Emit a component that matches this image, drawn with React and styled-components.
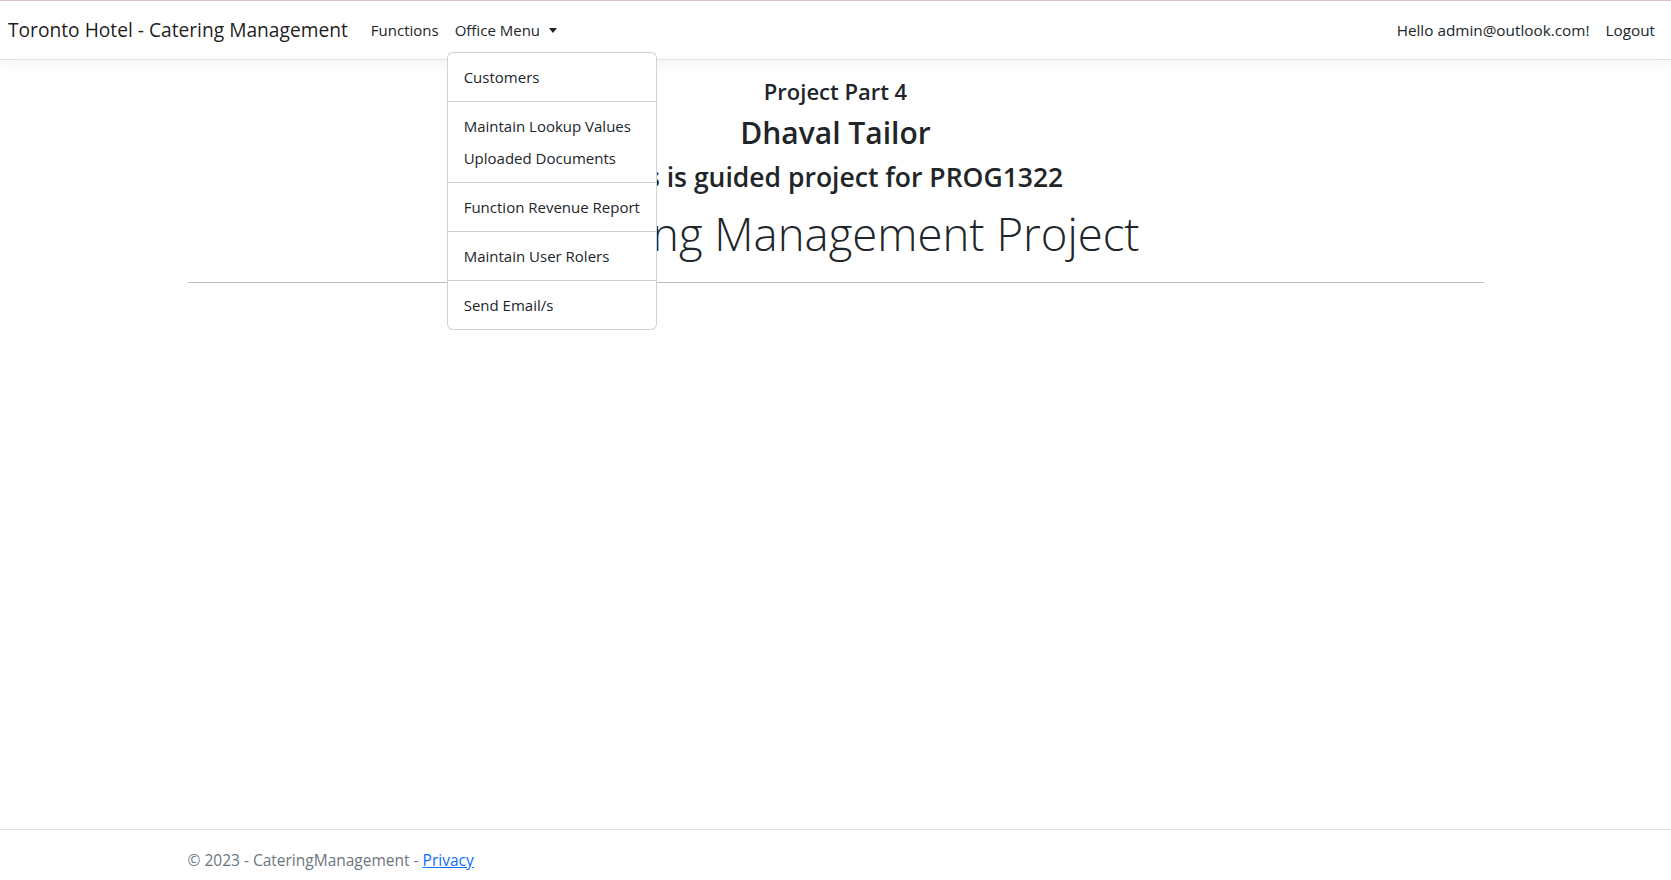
import React from 'react'
import styled, {createGlobalStyle} from 'styled-components'

const GlobalStyle = createGlobalStyle`
  html, body {
    margin: 0;
    padding: 0;
    height: 100%;
    overflow: hidden;
  }
  body {
    font-family: "Open Sans", "Noto Sans", sans-serif;
    font-size: 16px;
    color: #212529;
    background: #fff;
  }
  *, *::before, *::after {
    box-sizing: border-box;
  }
`

const Page = styled.div`
  display: flex;
  flex-direction: column;
  height: 880px;
`

const Navbar = styled.nav`
  display: flex;
  align-items: center;
  height: 60px;
  padding: 0 8px;
  border-top: 1px solid #d8c6cb;
  border-bottom: 1px solid #dee2e6;
  box-shadow: 0 4px 12px rgba(0, 0, 0, 0.05);
  background: #fff;
  position: relative;
  z-index: 2;
`

const Brand = styled.a`
  font-size: 19.2px;
  line-height: 30px;
  color: rgba(0, 0, 0, 0.9);
  text-decoration: none;
  margin-right: 15px;
  white-space: nowrap;
`

const NavList = styled.ul`
  display: flex;
  align-items: center;
  list-style: none;
  margin: 0;
  padding: 0;
  margin-left: ${props => props.right ? 'auto' : '0'};
`

const NavItem = styled.li`
  position: relative;
`

const NavLink = styled.a`
  display: block;
  padding: 8px;
  font-size: ${props => props.size || 15}px;
  line-height: 24px;
  color: #212529;
  text-decoration: none;
  white-space: nowrap;
  cursor: pointer;
`

const Toggle = styled(NavLink)`
  &::after {
    content: '';
    display: inline-block;
    margin-left: 9px;
    vertical-align: 3px;
    border-top: 5px solid #212529;
    border-left: 4.5px solid transparent;
    border-right: 4.5px solid transparent;
  }
`

const Menu = styled.ul`
  position: absolute;
  top: calc(100% + 2px);
  left: 0;
  width: 210px;
  margin: 0;
  padding: 8px 0;
  list-style: none;
  background: #fff;
  border: 1px solid rgba(0, 0, 0, 0.175);
  border-radius: 6px;
  z-index: 10;
`

const MenuLink = styled.a`
  display: block;
  padding: 4px 16px;
  font-size: 15px;
  line-height: 24px;
  color: #212529;
  text-decoration: none;
  white-space: nowrap;
`

const Divider = styled.hr`
  margin: 8px 0;
  border: 0;
  border-top: 1px solid rgba(0, 0, 0, 0.175);
`

const Main = styled.main`
  flex: 1;
  width: 1320px;
  margin: 18px auto 0;
  padding: 0 12px 16px;
`

const Hero = styled.div`
  text-align: center;
`

const Heading = styled.h1`
  margin: 0 0 ${props => props.gap}px;
  font-size: ${props => props.size}px;
  font-weight: ${props => props.weight || 600};
  line-height: 1.2;
  color: #212529;
  white-space: nowrap;
`

const Rule = styled.hr`
  margin: 21px 0 16px;
  border: 0;
  border-top: 1px solid rgba(0, 0, 0, 0.25);
`

const Footer = styled.footer`
  height: 51px;
  border-top: 1px solid #dee2e6;
  overflow: hidden;
`

const FooterInner = styled.div`
  width: 1320px;
  margin: 0 auto;
  padding: 0 12px;
  line-height: 60px;
  font-size: 15.5px;
  color: #6c757d;
  white-space: nowrap;

  a {
    color: #0d6efd;
    text-decoration: underline;
  }
`

const officeMenu = [
  ['Customers'],
  ['Maintain Lookup Values', 'Uploaded Documents'],
  ['Function Revenue Report'],
  ['Maintain User Rolers'],
  ['Send Email/s'],
]

export default function App() {
  return (
    <Page>
      <GlobalStyle />
      <Navbar>
        <Brand href="#">Toronto Hotel - Catering Management</Brand>
        <NavList>
          <NavItem><NavLink>Functions</NavLink></NavItem>
          <NavItem>
            <Toggle>Office Menu</Toggle>
            <Menu>
              {officeMenu.map((group, i) => (
                <React.Fragment key={i}>
                  {i > 0 && <li><Divider /></li>}
                  {group.map(item => (
                    <li key={item}><MenuLink href="#">{item}</MenuLink></li>
                  ))}
                </React.Fragment>
              ))}
            </Menu>
          </NavItem>
        </NavList>
        <NavList right>
          <NavItem><NavLink size={15.3}>Hello admin@outlook.com!</NavLink></NavItem>
          <NavItem><NavLink size={15.3}>Logout</NavLink></NavItem>
        </NavList>
      </Navbar>

      <Main>
        <Hero>
          <Heading as="h5" size={22} gap={11}>Project Part 4</Heading>
          <Heading as="h2" size={30} gap={11}>Dhaval Tailor</Heading>
          <Heading as="h4" size={26.5} gap={12}>This is guided project for PROG1322</Heading>
          <Heading as="h1" size={45.5} weight={300} gap={0}>Catering Management Project</Heading>
        </Hero>
        <Rule />
      </Main>

      <Footer>
        <FooterInner>
          &copy; 2023 - CateringManagement - <a href="#">Privacy</a>
        </FooterInner>
      </Footer>
    </Page>
  )
}
